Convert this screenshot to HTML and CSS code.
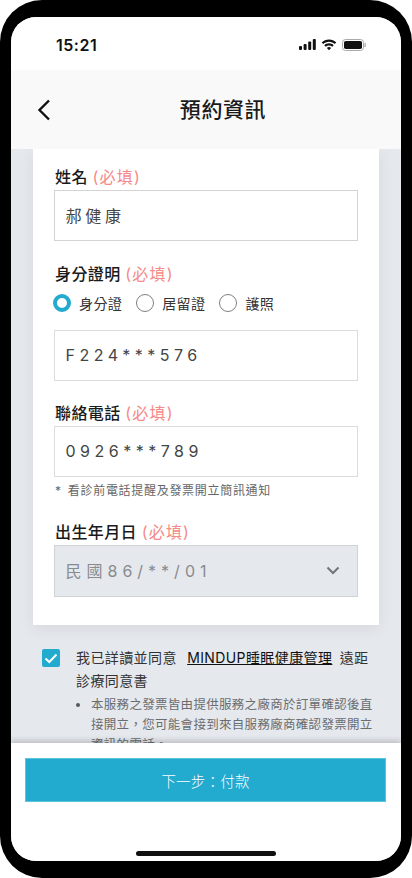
FILE: index.html
```html
<!DOCTYPE html>
<html lang="zh-Hant">
<head>
<meta charset="utf-8">
<title>預約資訊</title>
<link rel="stylesheet" href="styles.css">
</head>
<body>
<div class="phone">
  <div class="screen">
    <div class="status">
      <span class="time">15:21</span>
      <span class="status-icons">
        <svg width="17" height="11" viewBox="0 0 17 11"><rect x="0" y="7" width="3" height="4" rx="1"/><rect x="4.6" y="5" width="3" height="6" rx="1"/><rect x="9.2" y="2.5" width="3" height="8.500" rx="1"/><rect x="13.8" y="0" width="3" height="11" rx="1"/></svg>
        <svg width="16" height="12" viewBox="0 0 16 11"><path d="M8 2.300c2.200 0 4.200.9 5.700 2.300l1.600-1.600C13.400 1.100 10.800 0 8 0S2.600 1.100.7 3l1.600 1.600C3.800 3.200 5.800 2.300 8 2.300z"/><path d="M8 6c1.200 0 2.300.5 3.200 1.200l1.500-1.500C11.400 4.500 9.800 3.800 8 3.800s-3.400.7-4.700 1.900l1.500 1.500C5.700 6.500 6.800 6 8 6z"/><path d="M8 7.600c-.8 0-1.500.3-2.100.8L8 10.800l2.100-2.400c-.6-.5-1.300-.8-2.100-.8z"/></svg>
        <svg width="24" height="12" viewBox="0 0 24 12"><rect x=".5" y=".5" width="21" height="11" rx="3" fill="none" stroke="#aaa"/><rect x="2" y="2" width="18" height="8" rx="1.800"/><rect x="22.500" y="4" width="1.300" height="4" rx=".6" fill="#aaa"/></svg>
      </span>
    </div>
    <header class="nav">
      <svg class="back" width="14" height="22" viewBox="0 0 14 22"><path d="M12 1.500 2.500 11l9.500 9.500" fill="none" stroke="#111" stroke-width="2.400"/></svg>
      <h1 class="nav-title">預約資訊</h1>
    </header>
    <main class="content">
      <section class="card">
        <div class="field first">
          <div class="label">姓名 <span class="req">(必填)</span></div>
          <div class="input">郝健康</div>
        </div>
        <div class="field id-field">
          <div class="label">身分證明 <span class="req">(必填)</span></div>
          <div class="radios">
            <span class="radio on"><i class="dot"></i>身分證</span>
            <span class="radio"><i class="dot"></i>居留證</span>
            <span class="radio"><i class="dot"></i>護照</span>
          </div>
          <div class="input latin">F224***576</div>
        </div>
        <div class="field phone-field">
          <div class="label">聯絡電話 <span class="req">(必填)</span></div>
          <div class="input latin">0926***789</div>
          <div class="note">* 看診前電話提醒及發票開立簡訊通知</div>
        </div>
        <div class="field birth-field">
          <div class="label">出生年月日 <span class="req">(必填)</span></div>
          <div class="input select">
            <span>民國86/**/01</span>
            <svg width="14" height="9" viewBox="0 0 14 9"><path d="M1.500 1.500 7 7l5.500-5.500" fill="none" stroke="#70757a" stroke-width="2"/></svg>
          </div>
        </div>
      </section>
      <section class="consent">
        <span class="check"><svg width="14" height="11" viewBox="0 0 14 11"><path d="M1.500 5.500 5.300 9 12.500 1.500" fill="none" stroke="#fff" stroke-width="2"/></svg></span>
        <div class="consent-body">
          <p class="consent-text">我已詳讀並同意 <a class="link">MINDUP睡眠健康管理</a> 遠距診療同意書</p>
          <ul class="bullets">
            <li>本服務之發票皆由提供服務之廠商於訂單確認後直接開立，您可能會接到來自服務廠商確認發票開立資訊的電話。</li>
          </ul>
        </div>
      </section>
    </main>
    <footer class="footer">
      <button class="next">下一步：付款</button>
      <div class="home"></div>
    </footer>
  </div>
</div>
</body>
</html>
```
FILE: styles.css
```css
* { box-sizing: border-box; }
html, body { margin: 0; padding: 0; background: #fff; }
body { font-family: Inter, "Noto Sans CJK TC", sans-serif; width: 412px; height: 878px; overflow: hidden; }
.phone { width: 412px; height: 878px; background: #000; border-radius: 42px; padding: 17px 11px; }
.screen { width: 390px; height: 844px; background: #e5e8ed; border-radius: 25px; overflow: hidden; display: flex; flex-direction: column; position: relative; }
.status { height: 53px; flex: none; background: #fff; display: flex; justify-content: space-between; align-items: center; padding: 2px 35px 0 45px; }
.time { font-size: 16px; font-weight: 600; color: #111; letter-spacing: .5px; }
.status-icons { display: flex; align-items: center; gap: 5px; }
.status-icons svg { display: block; fill: #111; }
.nav { height: 79px; flex: none; background: #f9f9f9; display: flex; align-items: center; justify-content: center; position: relative; padding: 0 0 3px 34px; }
.back { position: absolute; left: 26px; top: 29px; }
.nav-title { margin: 0; font-size: 21px; font-weight: 500; color: #1a1a1a; letter-spacing: .6px; }
.content { flex: 1; min-height: 0; overflow: hidden; }
.card { margin: 0 22px; background: #fff; padding: 16px 21px 28px; box-shadow: 0 4px 14px rgba(0,0,0,.07); height: 476px; }
.label { font-size: 16px; line-height: 24px; font-weight: 500; color: #1a1a1a; height: 24px; letter-spacing: .4px; padding-left: 1px; }
.req { font-weight: 400; color: #f58a8a; letter-spacing: 1.200px; }
.input { height: 51px; border: 1.500px solid #dcdcdc; background: #fff; margin-top: 1px; padding: 0 10.500px 2px; display: flex; align-items: center; font-size: 16px; letter-spacing: 3.800px; color: #444; }
.input.latin { letter-spacing: 4.500px; }
.field.first .input { border-color: #d4d4d4; }
.id-field { margin-top: 21px; }
.radios { display: flex; height: 30px; margin-top: 2px; margin-left: -1px; align-items: center; gap: 14px; }
.radio { display: flex; align-items: center; gap: 8px; font-size: 14px; letter-spacing: .4px; color: #333; }
.dot { width: 18px; height: 18px; border-radius: 50%; border: 1.500px solid #808080; background: #fff; display: block; }
.radio.on .dot { border: 4px solid #22aacf; }
.id-field .input { margin-top: 12px; }
.phone-field { margin-top: 20px; }
.note { font-size: 12px; line-height: 16px; color: #666; margin-top: 6px; padding-left: 1px; letter-spacing: .7px; word-spacing: 2px; }
.birth-field { margin-top: 21px; }
.input.select { margin-top: 1px; height: 52px; background: #e5e8ed; border-color: #d0d3d6; color: #888b8f; justify-content: space-between; padding-right: 17px; letter-spacing: 5px; }
.consent { display: flex; margin-top: 24px; padding: 0 22px 0 31px; }
.check { width: 18px; height: 18px; flex: none; background: #22aacf; border-radius: 2px; display: flex; align-items: center; justify-content: center; }
.consent-body { margin-left: 16px; width: 300px; flex: none; }
.consent-text { margin: -3px 0 0; font-size: 14px; line-height: 23px; color: #333; letter-spacing: .4px; }
.link { color: #111; text-decoration: underline; margin: 0 3px 0 6px; }
.bullets { list-style: none; margin: 3px 0 0; padding: 0; font-size: 12.500px; line-height: 20px; color: #6a6d70; letter-spacing: .3px; }
.bullets li { display: flex; }
.bullets li::before { content: ""; flex: none; width: 4px; height: 4px; border-radius: 50%; background: #55585c; margin: 8px 11px 0 0; }
.footer { position: absolute; left: 0; right: 0; bottom: 0; height: 118px; background: #fff; box-shadow: 0 -3px 5px rgba(0,0,0,.16); padding: 15px 14px 0; }
.next { display: block; width: 361px; height: 44px; border: 1px solid #5cc3de; background: #22aacf; font-family: inherit; font-size: 14.500px; font-weight: 300; letter-spacing: .2px; color: #fff; }
.home { position: absolute; left: 125px; bottom: 5px; width: 140px; height: 5px; border-radius: 3px; background: #111; }
```
